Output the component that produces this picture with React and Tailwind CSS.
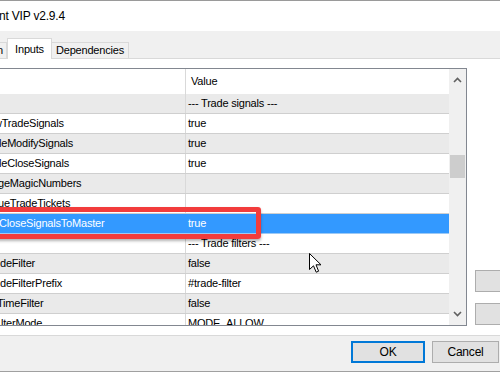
import React from 'react'

const rows = [
  { name: '', value: '--- Trade signals ---', shade: true },
  { name: 'wTradeSignals', value: 'true', offset: 'ml-[-6px]' },
  { name: 'leModifySignals', value: 'true', shade: true, offset: 'ml-[-1px]' },
  { name: 'leCloseSignals', value: 'true', offset: 'ml-[-1px]' },
  { name: 'geMagicNumbers', value: '', shade: true, offset: 'ml-[-2px]' },
  { name: 'ueTradeTickets', value: '', offset: 'ml-[-2px]' },
  { name: 'CloseSignalsToMaster', value: 'true', selected: true, offset: 'ml-[-1px]' },
  { name: '', value: '--- Trade filters ---' },
  { name: 'deFilter', value: 'false', shade: true },
  { name: 'deFilterPrefix', value: '#trade-filter' },
  { name: 'TimeFilter', value: 'false', shade: true, offset: 'ml-[-3px]' },
  { name: 'lterMode', value: 'MODE_ALLOW', offset: 'ml-[1px]' },
]

const Chevron = ({ down }) => (
  <svg width="9" height="6" viewBox="0 0 9 6" className={down ? 'rotate-180' : ''}>
    <path d="M1 5 L4.5 1.5 L8 5" fill="none" stroke="#606060" strokeWidth="1.6" />
  </svg>
)

const PropertyRow = ({ row }) => {
  const bg = row.selected ? 'bg-[#3399ff] text-white' : row.shade ? 'bg-[#eaeaea]' : 'bg-white'
  return (
    <div className={`flex h-[20px] shrink-0 border-b ${row.selected ? 'border-[#9cc9f5]' : 'border-[#cfcfcf]'} ${bg}`}>
      <div className={`flex w-[186px] items-center overflow-hidden whitespace-nowrap border-r ${row.selected ? 'border-[#3399ff]' : 'border-[#d9d9d9]'}`}>
        <span className={row.offset || ''}>{row.name}</span>
      </div>
      <div className="flex flex-1 items-center whitespace-nowrap pl-[2px]">{row.value}</div>
    </div>
  )
}

export default function App() {
  return (
    <div className="relative h-[372px] w-[500px] overflow-hidden bg-white font-['Liberation_Sans',Arial,sans-serif] text-[11px] tracking-[-0.2px] text-black">
      {/* title bar */}
      <div className="flex h-[31px] items-center border-t border-[#9a9a9a] text-[12px]">
        <span className="ml-[-1px]">nt VIP v2.9.4</span>
      </div>

      {/* tabs */}
      <div className="flex h-[28px] items-end border-b border-[#d9d9d9] bg-[#f0f0f0]">
        <div className="flex h-[16px] w-[7px] items-center justify-end overflow-hidden border-r border-t border-[#d9d9d9] pr-[3px]">
          <span>n</span>
        </div>
        <div className="mb-[-1px] flex h-[21px] w-[45px] items-center justify-center border-x border-t border-[#d9d9d9] bg-white">
          Inputs
        </div>
        <div className="flex h-[16px] w-[77px] items-center justify-center border-r border-t border-[#d9d9d9]">
          Dependencies
        </div>
      </div>

      {/* tab page */}
      <div className="flex h-[277px] items-start border-b border-[#d9d9d9] pt-[9px]">
        <div className="ml-[-1px] flex h-[258px] w-[468px] shrink-0 border border-[#828790]">
          <div className="flex w-[449px] flex-col overflow-hidden">
            <div className="flex h-[25px] shrink-0 bg-white">
              <div className="w-[186px] border-r border-[#d9d9d9]" />
              <div className="flex items-center pl-[5px]">Value</div>
            </div>
            {rows.map((row, i) => (
              <PropertyRow key={i} row={row} />
            ))}
          </div>
          <div className="flex w-[17px] flex-col items-center bg-[#f0f0f0]">
            <div className="flex h-[20px] items-center justify-center pt-[1px]">
              <Chevron />
            </div>
            <div className="mt-[66px] h-[23px] w-[15px] bg-[#cdcdcd]" />
            <div className="flex-1" />
            <div className="flex h-[20px] items-center justify-center pb-[3px]">
              <Chevron down />
            </div>
          </div>
        </div>
        <div className="ml-[8px] mt-[202px] flex flex-col gap-[11px]">
          <div className="h-[22px] w-[75px] border border-[#adadad] bg-[#e1e1e1]" />
          <div className="h-[22px] w-[75px] border border-[#adadad] bg-[#e1e1e1]" />
        </div>
      </div>

      {/* footer */}
      <div className="flex h-[36px] items-start justify-end gap-[7px] border-b border-[#a0a0a0] bg-[#f0f0f0] pr-[1px] pt-[5px] text-[12px]">
        <button className="flex h-[22px] w-[74px] items-center justify-center border-2 border-[#0078d7] bg-[#e1e1e1]">
          OK
        </button>
        <button className="flex h-[22px] w-[67px] items-center justify-center border border-[#adadad] bg-[#e1e1e1]">
          Cancel
        </button>
      </div>

      {/* highlight box */}
      <div className="absolute left-[-10px] top-[207px] h-[32px] w-[271px] rounded-[3px] border-[5px] border-[#f23c3c] shadow-[0_2px_3px_rgba(0,0,0,0.3)]" />

      {/* mouse cursor */}
      <svg className="absolute left-[309px] top-[253px]" width="13" height="21" viewBox="0 0 13 21">
        <path d="M0.5 0.5 L0.5 16.5 L4.5 12.8 L7.2 19.2 L9.6 18.2 L7 11.8 L12 11.8 Z" fill="white" stroke="black" strokeWidth="1" />
      </svg>
    </div>
  )
}
